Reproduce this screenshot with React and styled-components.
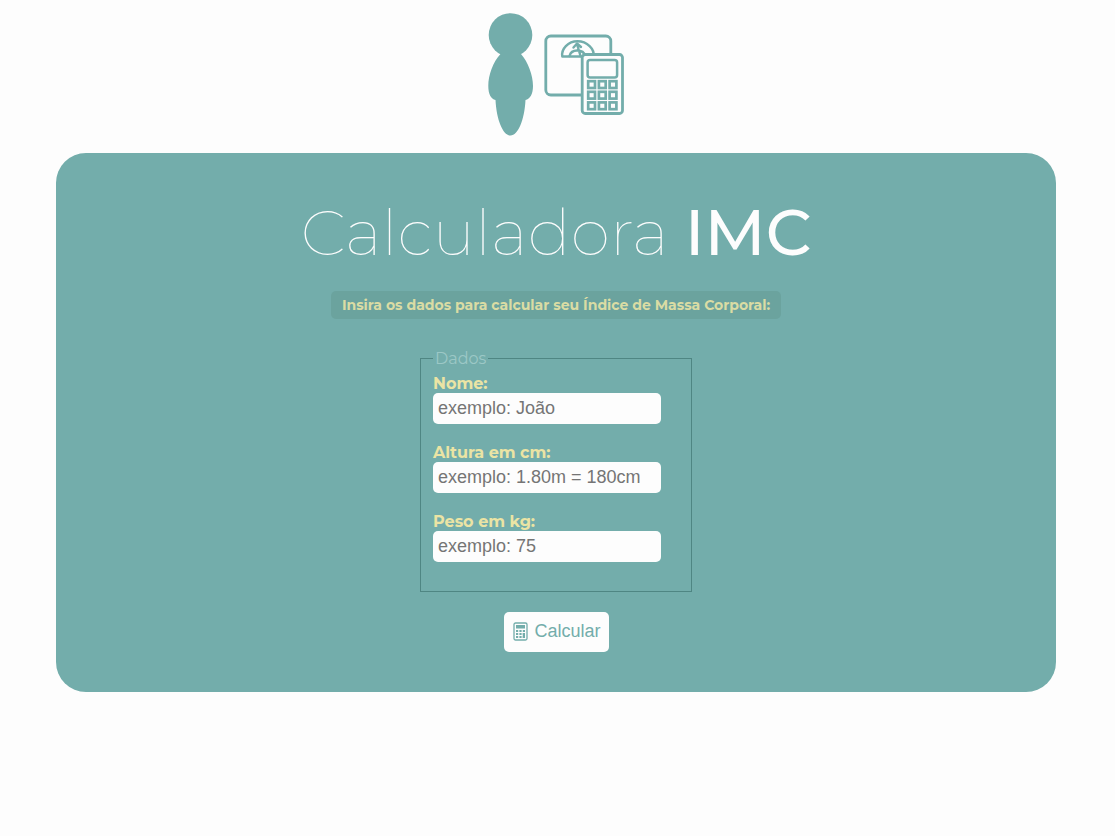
import React from "react";
import styled, { createGlobalStyle } from "styled-components";

const teal = "#73adab";

const GlobalStyle = createGlobalStyle`
  * { box-sizing: border-box; }
  body {
    margin: 0;
    background: #fdfdfd;
    font-family: Montserrat, Inter, "Open Sans", sans-serif;
  }
`;

const Page = styled.div`
  display: flex;
  flex-direction: column;
  align-items: center;
  padding: 0 19px 40px 16px;
`;

const Logo = styled.svg`
  display: block;
  width: 160px;
  height: 153px;
`;

const Card = styled.main`
  display: flex;
  flex-direction: column;
  align-items: center;
  width: 100%;
  max-width: 1000px;
  padding: 40px 20px;
  border-radius: 30px;
  background: ${teal};
`;

const Title = styled.h1`
  margin: 0 0 20px;
  color: #fdfdfd;
  font-size: 64px;
  line-height: 78px;
  font-weight: 100;
  text-align: center;
`;

const Strong = styled.strong`
  font-weight: 500;
`;

const Intro = styled.p`
  width: 450px;
  max-width: 100%;
  margin: 0 0 30px;
  border-radius: 5px;
  background: #6ba39e;
  color: #dadca4;
  font-size: 14px;
  line-height: 28px;
  font-weight: 700;
  text-align: center;
`;

const Form = styled.form`
  display: flex;
  flex-direction: column;
  align-items: center;
  gap: 20px;
`;

const Fields = styled.fieldset`
  width: 272px;
  margin: 0;
  padding: 7px 12px 29px;
  border: 1px solid #4f8683;
`;

const Legend = styled.legend`
  padding: 0 2px;
  color: #9cc8c6;
  font-size: 16px;
  line-height: 19px;
`;

const Field = styled.div`
  display: flex;
  flex-direction: column;
  align-items: flex-start;

  & + & { margin-top: 20px; }
`;

const Label = styled.label`
  color: #ebe4a4;
  font-size: 16px;
  line-height: 18px;
  font-weight: 700;
`;

const Input = styled.input`
  width: 228px;
  height: 31px;
  padding: 0 5px;
  border: 0;
  border-radius: 5px;
  background: #fdfdfd;
  color: #444;
  font: 18px "Liberation Sans", Arial, sans-serif;

  &::placeholder { color: #757575; opacity: 1; }
`;

const Button = styled.button`
  display: flex;
  align-items: center;
  justify-content: center;
  gap: 6px;
  width: 105px;
  height: 40px;
  padding: 0 0 2px 2px;
  border: 0;
  border-radius: 5px;
  background: #fdfdfd;
  color: ${teal};
  font: 18px "Liberation Sans", Arial, sans-serif;
  cursor: pointer;
`;

const ButtonIcon = styled.svg`
  width: 15px;
  height: 19px;
`;

const fields = [
  { id: "nome", label: "Nome:", placeholder: "exemplo: João" },
  { id: "altura", label: "Altura em cm:", placeholder: "exemplo: 1.80m = 180cm" },
  { id: "peso", label: "Peso em kg:", placeholder: "exemplo: 75" },
];

const grid = [0, 1, 2].flatMap((row) => [0, 1, 2].map((col) => ({ row, col })));

export default function App() {
  return (
    <>
      <GlobalStyle />
      <Page>
        <Logo viewBox="0 0 160 153" role="img" aria-label="Calculadora IMC">
          <g fill={teal}>
            <circle cx="34.5" cy="35" r="21.8" />
            <path d="M25 52H44L45 54C52 62 57 75 57 86C57 94 54 99 49.5 100C48.5 120 42 135.5 34.5 135.5C27 135.5 20.5 120 19.5 100C15 99 12.3 94 12.3 86C12.3 75 17 62 24.5 54Z" />
          </g>
          <g fill="none" stroke={teal} strokeWidth="2.8" strokeLinejoin="round" strokeLinecap="round">
            <rect x="69.8" y="36" width="65" height="59" rx="5" />
            <path d="M86.3 56.5C85 49 92 41.3 101.5 41.3C111 41.3 119 49 117.5 56.5Z" strokeWidth="2.4" />
            <path d="M93.5 56Q95 50.5 101 50.5Q108 50.5 109 56M101 44L104.500 56M97.500 47.500L101 43.500L105 47" strokeWidth="2.4" />
            <rect x="106.200" y="54.500" width="40.300" height="59" rx="3" fill="#fdfdfd" />
            <rect x="111.600" y="60" width="29.500" height="17.500" rx="2.500" strokeWidth="2.5" />
            {grid.map(({ row, col }) => (
              <rect
                key={`${row}-${col}`}
                x={112.2 + col * 10.7}
                y={81.200 + row * 10.6}
                width="6.800"
                height="6.800"
                strokeWidth="2.700"
                strokeLinejoin="miter"
              />
            ))}
          </g>
        </Logo>
        <Card>
          <Title>
            Calculadora <Strong>IMC</Strong>
          </Title>
          <Intro>Insira os dados para calcular seu Índice de Massa Corporal:</Intro>
          <Form onSubmit={(event) => event.preventDefault()}>
            <Fields>
              <Legend>Dados</Legend>
              {fields.map(({ id, label, placeholder }) => (
                <Field key={id}>
                  <Label htmlFor={id}>{label}</Label>
                  <Input id={id} name={id} placeholder={placeholder} />
                </Field>
              ))}
            </Fields>
            <Button type="submit">
              <ButtonIcon viewBox="0 0 15 19" aria-hidden="true">
                <rect x="1" y="1" width="13" height="17" rx="1.500" fill="none" stroke={teal} strokeWidth="1.300" />
                <rect x="3" y="3" width="9" height="3.500" fill={teal} />
                {grid.map(({ row, col }) => (
                  <rect key={`${row}-${col}`} x={3 + col * 3.4} y={8 + row * 3} width="2.200" height="2" fill={teal} />
                ))}
                <rect x="9.800" y="11" width="2.200" height="5" fill={teal} />
              </ButtonIcon>
              Calcular
            </Button>
          </Form>
        </Card>
      </Page>
    </>
  );
}
